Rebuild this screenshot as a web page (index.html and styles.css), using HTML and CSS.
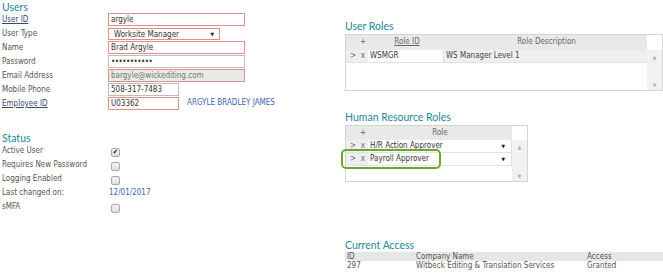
FILE: index.html
```html
<!DOCTYPE html>
<html lang="en">

<head>
    <meta charset="UTF-8">
    <title>User Maintenance</title>
    <link rel="stylesheet" href="styles.css">
</head>

<body>
    <div class="page">
        <div class="left">
            <h2 class="heading">Users</h2>
            <div class="form">
                <a class="label link">User ID</a>
                <div class="field"><span class="input wide required">argyle</span></div>

                <span class="label">User Type</span>
                <div class="field"><span class="select required">Worksite Manager<span class="arrow">&#9660;</span></span></div>

                <span class="label">Name</span>
                <div class="field"><span class="input wide required">Brad Argyle</span></div>

                <span class="label">Password</span>
                <div class="field"><span class="input wide dots">&#8226;&#8226;&#8226;&#8226;&#8226;&#8226;&#8226;&#8226;&#8226;&#8226;&#8226;</span></div>

                <span class="label">Email Address</span>
                <div class="field"><span class="input wide required readonly">bargyle@wickediting.com</span></div>

                <span class="label">Mobile Phone</span>
                <div class="field"><span class="input short">508-317-7483</span></div>

                <a class="label link">Employee ID</a>
                <div class="field"><span class="input short required">U03362</span><span class="fullname">ARGYLE BRADLEY JAMES</span></div>
            </div>

            <h2 class="heading status-heading">Status</h2>
            <div class="form">
                <span class="label">Active User</span>
                <div class="field"><span class="check checked">&#10004;</span></div>

                <span class="label">Requires New Password</span>
                <div class="field"><span class="check"></span></div>

                <span class="label">Logging Enabled</span>
                <div class="field"><span class="check"></span></div>

                <span class="label">Last changed on:</span>
                <div class="field"><span class="date">12/01/2017</span></div>

                <span class="label">sMFA</span>
                <div class="field"><span class="check"></span></div>
            </div>
        </div>

        <div class="right">
            <h2 class="heading">User Roles</h2>
            <div class="grid roles">
                <div class="grid-main">
                    <div class="grid-row grid-head">
                        <span class="c-nav"></span>
                        <span class="c-del">+</span>
                        <span class="c-id"><u>Role ID</u></span>
                        <span class="c-desc">Role Description</span>
                    </div>
                    <div class="grid-row">
                        <span class="c-nav">&gt;</span>
                        <span class="c-del">x</span>
                        <span class="c-id cell-edit">WSMGR</span>
                        <span class="c-desc">WS Manager Level 1</span>
                    </div>
                </div>
                <div class="scroll">
                    <span>&#9650;</span>
                    <span>&#9660;</span>
                </div>
            </div>

            <h2 class="heading hr-heading">Human Resource Roles</h2>
            <div class="grid hr">
                <div class="grid-main">
                    <div class="grid-row grid-head">
                        <span class="c-nav"></span>
                        <span class="c-del">+</span>
                        <span class="c-role">Role</span>
                    </div>
                    <div class="grid-row">
                        <span class="c-nav">&gt;</span>
                        <span class="c-del">x</span>
                        <span class="c-role cell-edit cell-select">H/R Action Approver<span class="arrow">&#9660;</span></span>
                    </div>
                    <div class="grid-row">
                        <span class="c-nav">&gt;</span>
                        <span class="c-del">x</span>
                        <span class="c-role cell-edit cell-select">Payroll Approver<span class="arrow">&#9660;</span></span>
                    </div>
                </div>
                <div class="scroll">
                    <span>&#9650;</span>
                    <span>&#9660;</span>
                </div>
                <div class="highlight"></div>
            </div>

            <h2 class="heading access-heading">Current Access</h2>
            <table class="access">
                <thead>
                    <tr>
                        <th class="a-id">ID</th>
                        <th class="a-name">Company Name</th>
                        <th>Access</th>
                    </tr>
                </thead>
                <tbody>
                    <tr>
                        <td>297</td>
                        <td>Witbeck Editing &amp; Translation Services</td>
                        <td>Granted</td>
                    </tr>
                </tbody>
            </table>
        </div>
    </div>
</body>

</html>
```

FILE: styles.css
```css
* {
    margin: 0;
    padding: 0;
    box-sizing: border-box;
}

body {
    background-color: #fff;
    font-family: "DejaVu Sans Condensed", "DejaVu Sans", sans-serif;
    font-stretch: condensed;
    font-size: 8px;
    color: #555;
}

.page {
    display: flex;
}

.left {
    width: 345px;
    padding-left: 2px;
}

.right {
    width: 318px;
}

.heading {
    font-family: Lato, sans-serif;
    font-weight: normal;
    font-size: 10.5px;
    line-height: 12px;
    color: #23879a;
    height: 12px;
}

.left .heading {
    margin-top: 1px;
}

.left .status-heading {
    margin-top: 21px;
}

/* form rows */
.form {
    display: grid;
    grid-template-columns: 106px auto;
    grid-auto-rows: 14px;
}

.label {
    line-height: 14px;
    color: #555;
}

.link {
    color: #3b4866;
    text-decoration: underline;
}

.field {
    display: flex;
    align-items: flex-start;
}

.input,
.select {
    display: block;
    height: 13px;
    line-height: 11px;
    border: 1px solid #bdbdbd;
    padding-left: 2px;
    color: #333;
    background-color: #fff;
    white-space: nowrap;
}

.wide {
    width: 137px;
}

.short {
    width: 71px;
}

.required {
    border-color: #e48c8c;
}

.readonly {
    background-color: #e9e9e5;
    color: #777;
}

.dots {
    letter-spacing: -0.5px;
    font-size: 8px;
}

.select {
    position: relative;
    width: 112px;
    height: 12px;
    padding-left: 5px;
    margin-top: 1px;
}

.arrow {
    position: absolute;
    right: 5px;
    top: 0;
    font-size: 5px;
    line-height: 10px;
    color: #111;
}

.fullname {
    margin-left: 8px;
    line-height: 12px;
    color: #3b63b4;
}

.check {
    display: block;
    width: 9px;
    height: 9px;
    margin: 4px 0 0 3px;
    border: 1px solid #a9a9a9;
    border-radius: 2px;
    background: linear-gradient(#f4f4f4, #dcdcdc);
    font-size: 7px;
    line-height: 7px;
    text-align: center;
    color: #111;
}

.date {
    padding-left: 1px;
    line-height: 14px;
    color: #3b63b4;
}

/* right column grids */
.right .heading {
    margin-top: 20px;
    margin-bottom: 2px;
}

.right .hr-heading {
    margin-top: 20px;
}

.right .access-heading {
    margin-top: 57px;
    margin-bottom: 1px;
}

.grid {
    position: relative;
    display: flex;
    border: 1px solid #d4d4d4;
    background-color: #fff;
}

.roles {
    width: 318px;
    height: 57px;
}

.hr {
    width: 183px;
    height: 57px;
}

.grid-main {
    flex: 1;
}

.grid-row {
    display: flex;
    height: 13px;
    line-height: 12px;
    background-color: #efefef;
    border-bottom: 1px solid #e2e2e2;
    color: #666;
}

.grid-head {
    height: 14px;
    line-height: 14px;
    background-color: #e9e9e9;
    border-bottom: none;
}

.roles .grid-head {
    height: 15px;
}

.c-nav {
    width: 12px;
    padding-left: 4px;
}

.c-del {
    width: 10px;
    text-align: center;
}

.c-id {
    width: 76px;
    padding-left: 2px;
}

.grid-head .c-id {
    text-align: center;
}

.c-desc {
    flex: 1;
    padding-left: 2px;
    color: #444;
}

.grid-head .c-desc {
    text-align: center;
    color: #666;
}

.c-role {
    flex: 1;
    text-align: center;
}

.cell-edit {
    background-color: #fff;
    color: #333;
    border-right: 1px solid #e2e2e2;
}

.cell-select {
    position: relative;
    text-align: left;
    padding-left: 2px;
}

.cell-select .arrow {
    right: 6px;
    line-height: 12px;
}

.scroll {
    display: flex;
    flex-direction: column;
    justify-content: space-between;
    width: 15px;
    margin-top: 14px;
    padding: 4px 0 2px;
    background-color: #f1f1f1;
    font-size: 5px;
    text-align: center;
    color: #aaa;
}

.roles .scroll {
    margin-top: 15px;
}

.highlight {
    position: absolute;
    left: -5px;
    top: 23px;
    width: 100px;
    height: 20px;
    border: 2.5px solid #69a82a;
    border-radius: 5px;
}

/* current access */
.access {
    width: 318px;
    border-collapse: collapse;
    color: #555;
}

.access th {
    font-weight: normal;
    text-align: left;
    background-color: #e6e6e6;
    height: 9px;
    line-height: 9px;
    padding-left: 2px;
}

.access td {
    height: 10px;
    line-height: 10px;
    padding-left: 2px;
}

.a-id {
    width: 69px;
}

.a-name {
    width: 171px;
}
```
